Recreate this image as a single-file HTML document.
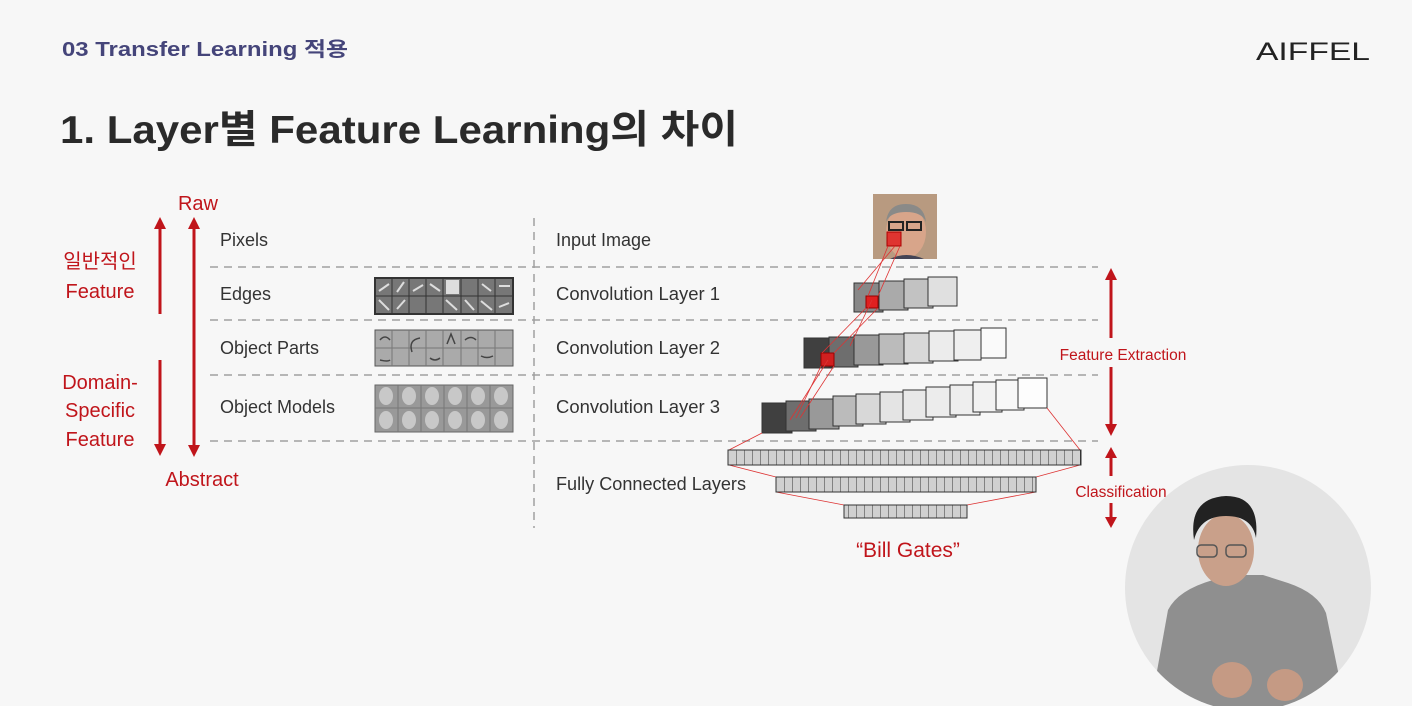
<!DOCTYPE html><html><head><meta charset="utf-8"><style>
html,body{margin:0;padding:0;background:#f7f7f7;}
svg{display:block;font-family:"Liberation Sans","Noto Sans CJK KR",sans-serif;}
</style></head><body>
<svg width="1412" height="706" viewBox="0 0 1412 706" xmlns="http://www.w3.org/2000/svg">
<rect width="1412" height="706" fill="#f7f7f7"/>
<text x="62" y="56" font-size="20" font-weight="bold" fill="#45457a" textLength="286" lengthAdjust="spacingAndGlyphs">03 Transfer Learning 적용</text>
<text x="1256" y="60" font-size="25" fill="#222" textLength="114" lengthAdjust="spacingAndGlyphs">AIFFEL</text>
<text x="60" y="143" font-size="39" font-weight="bold" fill="#2a2a2a" textLength="678" lengthAdjust="spacingAndGlyphs">1. Layer별 Feature Learning의 차이</text>

<g fill="#c0151b" font-size="20" text-anchor="middle">
<text x="198" y="210">Raw</text>
<text x="100" y="268">일반적인</text>
<text x="100" y="298">Feature</text>
<text x="100" y="389">Domain-</text>
<text x="100" y="417">Specific</text>
<text x="100" y="446">Feature</text>
<text x="202" y="486">Abstract</text>
<text x="908" y="557" font-size="21">“Bill Gates”</text>
</g>
<g fill="#c0151b" font-size="15.5" text-anchor="middle">
<text x="1123" y="360">Feature Extraction</text>
<text x="1121" y="497">Classification</text>
</g>
<g stroke="#c0151b" stroke-width="3" fill="none">
<line x1="160" y1="228" x2="160" y2="314"/><line x1="160" y1="360" x2="160" y2="445"/>
<line x1="194" y1="228" x2="194" y2="446"/>
<line x1="1111" y1="278" x2="1111" y2="338"/><line x1="1111" y1="367" x2="1111" y2="425"/>
<line x1="1111" y1="456" x2="1111" y2="476"/><line x1="1111" y1="503" x2="1111" y2="518"/>
</g>
<g fill="#c0151b">
<path d="M160 217l-6 12h12z"/><path d="M160 456l-6-12h12z"/>
<path d="M194 217l-6 12h12z"/><path d="M194 457l-6-12h12z"/>
<path d="M1111 268l-6 12h12z"/><path d="M1111 436l-6-12h12z"/>
<path d="M1111 447l-6 11h12z"/><path d="M1111 528l-6-11h12z"/>
</g>

<g stroke="#a0a0a0" stroke-width="1.5" stroke-dasharray="8,6">
<line x1="210" y1="267" x2="1098" y2="267"/>
<line x1="210" y1="320" x2="1098" y2="320"/>
<line x1="210" y1="375" x2="1098" y2="375"/>
<line x1="210" y1="441" x2="1098" y2="441"/>
<line x1="534" y1="218" x2="534" y2="528"/>
</g>

<g font-size="18" fill="#333">
<text x="220" y="246">Pixels</text>
<text x="220" y="300">Edges</text>
<text x="220" y="354">Object Parts</text>
<text x="220" y="413">Object Models</text>
<text x="556" y="246">Input Image</text>
<text x="556" y="300" textLength="164" lengthAdjust="spacingAndGlyphs">Convolution Layer 1</text>
<text x="556" y="354" textLength="164" lengthAdjust="spacingAndGlyphs">Convolution Layer 2</text>
<text x="556" y="413" textLength="164" lengthAdjust="spacingAndGlyphs">Convolution Layer 3</text>
<text x="556" y="490" textLength="190" lengthAdjust="spacingAndGlyphs">Fully Connected Layers</text>
</g>

<rect x="375" y="278" width="138" height="36" fill="#777" stroke="#333" stroke-width="2"/>
<g stroke="#333" stroke-width="1">
<line x1="375" y1="296" x2="513" y2="296"/>
<line x1="392" y1="278" x2="392" y2="314"/><line x1="409" y1="278" x2="409" y2="314"/><line x1="426" y1="278" x2="426" y2="314"/><line x1="443" y1="278" x2="443" y2="314"/><line x1="461" y1="278" x2="461" y2="314"/><line x1="478" y1="278" x2="478" y2="314"/><line x1="495" y1="278" x2="495" y2="314"/>
</g>
<g stroke="#ddd" stroke-width="2">
<line x1="379" y1="291" x2="389" y2="284"/><line x1="397" y1="292" x2="404" y2="282"/><line x1="413" y1="291" x2="423" y2="285"/><line x1="430" y1="284" x2="440" y2="291"/><line x1="482" y1="284" x2="491" y2="291"/><line x1="499" y1="286" x2="510" y2="286"/>
<line x1="379" y1="300" x2="389" y2="310"/><line x1="397" y1="309" x2="405" y2="300"/><line x1="446" y1="300" x2="457" y2="310"/><line x1="465" y1="300" x2="474" y2="310"/><line x1="481" y1="301" x2="492" y2="310"/><line x1="499" y1="307" x2="509" y2="303"/>
</g>
<rect x="446" y="280" width="13" height="14" fill="#ddd"/>
<rect x="375" y="330" width="138" height="36" fill="#aaa" stroke="#555"/>
<g stroke="#777" stroke-width="1"><line x1="375" y1="348" x2="513" y2="348"/>
<line x1="392" y1="330" x2="392" y2="366"/><line x1="409" y1="330" x2="409" y2="366"/><line x1="426" y1="330" x2="426" y2="366"/><line x1="443" y1="330" x2="443" y2="366"/><line x1="461" y1="330" x2="461" y2="366"/><line x1="478" y1="330" x2="478" y2="366"/><line x1="495" y1="330" x2="495" y2="366"/></g>
<g stroke="#444" stroke-width="1.5" fill="none"><path d="M380 340q5-6 10 0"/><path d="M412 352q-4-12 8-14"/><path d="M447 344l4-10 4 10"/><path d="M465 340q6-5 11 0"/><path d="M481 356q6 3 12 0"/><path d="M380 360q8 2 10 0"/><path d="M430 358q5 4 10 0"/></g>
<rect x="375" y="385" width="138" height="47" fill="#999" stroke="#666"/>
<g stroke="#777"><line x1="375" y1="408" x2="513" y2="408"/>
<line x1="398" y1="385" x2="398" y2="432"/><line x1="421" y1="385" x2="421" y2="432"/><line x1="444" y1="385" x2="444" y2="432"/><line x1="467" y1="385" x2="467" y2="432"/><line x1="490" y1="385" x2="490" y2="432"/></g>
<g fill="#c8c8c8"><ellipse cx="386" cy="396" rx="7" ry="9"/><ellipse cx="409" cy="396" rx="7" ry="9"/><ellipse cx="432" cy="396" rx="7" ry="9"/><ellipse cx="455" cy="396" rx="7" ry="9"/><ellipse cx="478" cy="396" rx="7" ry="9"/><ellipse cx="501" cy="396" rx="7" ry="9"/><ellipse cx="386" cy="420" rx="7" ry="9"/><ellipse cx="409" cy="420" rx="7" ry="9"/><ellipse cx="432" cy="420" rx="7" ry="9"/><ellipse cx="455" cy="420" rx="7" ry="9"/><ellipse cx="478" cy="420" rx="7" ry="9"/><ellipse cx="501" cy="420" rx="7" ry="9"/></g>

<rect x="873" y="194" width="64" height="65" fill="#b89a80"/>
<ellipse cx="906" cy="232" rx="20" ry="26" fill="#d8a58a"/>
<path d="M886 222q2-18 20-18q18 0 20 18q-4-10-20-10q-16 0-20 10z" fill="#8a8a88"/>
<rect x="889" y="222" width="14" height="8" fill="none" stroke="#222" stroke-width="2"/><rect x="907" y="222" width="14" height="8" fill="none" stroke="#222" stroke-width="2"/>
<path d="M890 259q16-8 34 0z" fill="#445"/>
<rect x="887" y="232" width="14" height="14" fill="#e02020" fill-opacity="0.85" stroke="#a00"/>

<g stroke="#333" stroke-width="1">
<rect x="854" y="283" width="29" height="29" fill="#888"/>
<rect x="879" y="281" width="29" height="29" fill="#aaa"/>
<rect x="904" y="279" width="29" height="29" fill="#c2c2c2"/>
<rect x="928" y="277" width="29" height="29" fill="#e0e0e0"/>
<rect x="804" y="338" width="29" height="30" fill="#404040"/>
<rect x="829" y="337" width="29" height="30" fill="#6e6e6e"/>
<rect x="854" y="335" width="29" height="30" fill="#999"/>
<rect x="879" y="334" width="29" height="30" fill="#bbb"/>
<rect x="904" y="333" width="29" height="30" fill="#d8d8d8"/>
<rect x="929" y="331" width="29" height="30" fill="#ececec"/>
<rect x="954" y="330" width="27" height="30" fill="#efefef"/>
<rect x="981" y="328" width="25" height="30" fill="#fafafa"/>
<rect x="762" y="403" width="30" height="30" fill="#404040"/>
<rect x="786" y="401" width="30" height="30" fill="#6e6e6e"/>
<rect x="809" y="399" width="30" height="30" fill="#999"/>
<rect x="833" y="396" width="30" height="30" fill="#bbb"/>
<rect x="856" y="394" width="30" height="30" fill="#d8d8d8"/>
<rect x="880" y="392" width="30" height="30" fill="#e4e4e4"/>
<rect x="903" y="390" width="30" height="30" fill="#e8e8e8"/>
<rect x="926" y="387" width="30" height="30" fill="#ececec"/>
<rect x="950" y="385" width="30" height="30" fill="#eee"/>
<rect x="973" y="382" width="29" height="30" fill="#f2f2f2"/>
<rect x="996" y="380" width="28" height="30" fill="#f8f8f8"/>
<rect x="1018" y="378" width="29" height="30" fill="#fdfdfd"/>
</g>
<rect x="866" y="296" width="12" height="12" fill="#e02020" stroke="#900"/>
<rect x="821" y="353" width="13" height="13" fill="#d02020" stroke="#900"/>
<g stroke="#d33" stroke-width="0.8">
<line x1="888" y1="246" x2="868" y2="296"/><line x1="900" y1="246" x2="878" y2="296"/><line x1="895" y1="246" x2="858" y2="290"/>
<line x1="866" y1="308" x2="822" y2="353"/><line x1="878" y1="308" x2="834" y2="353"/><line x1="872" y1="300" x2="850" y2="346"/>
<line x1="821" y1="366" x2="796" y2="418"/><line x1="834" y1="366" x2="800" y2="418"/><line x1="828" y1="360" x2="790" y2="420"/>
<line x1="762" y1="433" x2="729" y2="450"/><line x1="1047" y1="408" x2="1080" y2="450"/>
<line x1="729" y1="465" x2="776" y2="477"/><line x1="1080" y1="465" x2="1036" y2="477"/>
<line x1="776" y1="492" x2="844" y2="505"/><line x1="1036" y1="492" x2="967" y2="505"/>
</g>
<defs>
<pattern id="cells" width="8" height="20" patternUnits="userSpaceOnUse"><rect width="8" height="20" fill="#d0d0d0"/><line x1="0" y1="0" x2="0" y2="20" stroke="#333" stroke-width="1"/></pattern>
</defs>
<rect x="728" y="450" width="353" height="15" fill="url(#cells)" stroke="#333"/>
<rect x="776" y="477" width="260" height="15" fill="url(#cells)" stroke="#333"/>
<rect x="844" y="505" width="123" height="13" fill="url(#cells)" stroke="#333"/>

<defs><clipPath id="cc"><circle cx="1248" cy="588" r="123"/></clipPath></defs>
<circle cx="1248" cy="588" r="123" fill="#e4e4e4"/>
<g clip-path="url(#cc)">
<path d="M1150 710l18-100q10-20 45-30l20-5h30l25 8q30 10 38 30l20 97z" fill="#8f8f8f"/>
<ellipse cx="1226" cy="550" rx="28" ry="36" fill="#c9a08a"/>
<path d="M1194 540q-6-42 32-44q34 0 30 42q-4-22-30-22q-26 0-32 24z" fill="#222"/>
<rect x="1197" y="545" width="20" height="12" rx="4" fill="none" stroke="#555" stroke-width="1.5"/><rect x="1226" y="545" width="20" height="12" rx="4" fill="none" stroke="#555" stroke-width="1.5"/>
<ellipse cx="1232" cy="680" rx="20" ry="18" fill="#c59a84"/><ellipse cx="1285" cy="685" rx="18" ry="16" fill="#c59a84"/>
</g>
</svg>
</body></html>
